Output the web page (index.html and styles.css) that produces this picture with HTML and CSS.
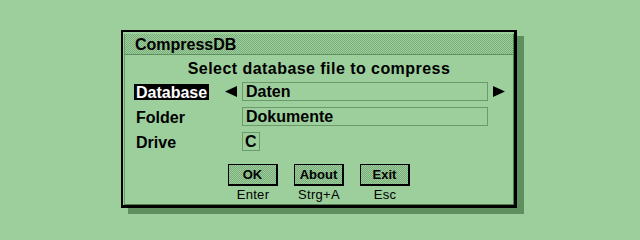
FILE: index.html
```html
<!DOCTYPE html>
<html>
<head>
<meta charset="utf-8">
<link rel="stylesheet" href="styles.css">
</head>
<body>
<div class="dialog">
  <div class="panel">
    <div class="titlebar">CompressDB</div>
    <div class="heading">Select database file to compress</div>
    <div class="form">
      <div class="label selected">Database</div>
      <div class="arrow-left"><svg width="12" height="11" viewBox="0 0 12 11"><polygon points="0,5.5 12,0 12,11" fill="#000"/></svg></div>
      <div class="field">Daten</div>
      <div class="arrow-right"><svg width="12" height="11" viewBox="0 0 12 11"><polygon points="12,5.5 0,0 0,11" fill="#000"/></svg></div>

      <div class="label">Folder</div>
      <div class="spacer"></div>
      <div class="field">Dokumente</div>
      <div class="spacer"></div>

      <div class="label">Drive</div>
      <div class="spacer"></div>
      <div class="field small">C</div>
      <div class="spacer"></div>
    </div>
    <div class="buttons">
      <div class="btn-group">
        <div class="btn">OK</div>
        <div class="caption">Enter</div>
      </div>
      <div class="btn-group">
        <div class="btn">About</div>
        <div class="caption">Strg+A</div>
      </div>
      <div class="btn-group">
        <div class="btn">Exit</div>
        <div class="caption">Esc</div>
      </div>
    </div>
  </div>
</div>
</body>
</html>
```
FILE: styles.css
```css
html, body {
  margin: 0;
  padding: 0;
}
body {
  background: #9ccf9c;
  width: 640px;
  height: 240px;
  overflow: hidden;
  font-family: "Liberation Sans", Arial, sans-serif;
  color: #000;
  padding: 30px 0 0 121px;
  box-sizing: border-box;
}
.dialog {
  width: 396px;
  height: 178px;
  box-sizing: border-box;
  border: 2px solid #000;
  border-right-width: 3px;
  border-bottom-width: 3px;
  box-shadow: 7px 6px 0 #5f8f5f;
  padding: 2px 0 0 1px;
  background: #9ccf9c;
}
.panel {
  height: 100%;
  box-sizing: border-box;
  border-left: 1px solid #6b9b6b;
  border-right: 1px solid #4f7f4f;
  border-bottom: 1px solid #4f7f4f;
  display: flex;
  flex-direction: column;
}
.titlebar {
  height: 20px;
  line-height: 21px;
  font-size: 16px;
  font-weight: bold;
  padding-left: 10px;
  border-bottom: 1px solid #5f8f5f;
  background: repeating-conic-gradient(#7aab7a 0 25%, #9ccf9c 0 50%) 0 0 / 2px 2px;
}
.heading {
  margin-top: 5px;
  text-align: center;
  font-size: 16px;
  font-weight: bold;
  letter-spacing: 0.45px;
  line-height: 18px;
}
.form {
  margin-top: 4px;
  padding-left: 9px;
  display: grid;
  grid-template-columns: 75px 33px 246px 17px;
  grid-auto-rows: 19px;
  row-gap: 6px;
}
.label {
  align-self: center;
  justify-self: start;
  font-size: 16px;
  font-weight: bold;
  line-height: 17px;
  height: 16px;
  padding: 0 2px;
}
.label.selected {
  background: #000;
  color: #fff;
  width: 71px;
}
.arrow-left {
  justify-self: end;
  margin-right: 5px;
  display: flex;
  align-items: center;
}
.arrow-right {
  justify-self: end;
  display: flex;
  align-items: center;
}
.arrow-left svg, .arrow-right svg {
  display: block;
}
.field {
  box-sizing: border-box;
  border: 1px solid #6b9b6b;
  height: 19px;
  line-height: 18px;
  font-size: 16px;
  font-weight: bold;
  padding-left: 3px;
}
.field.small {
  width: 18px;
  padding-left: 2px;
}
.buttons {
  margin-top: 13px;
  display: flex;
  justify-content: center;
  gap: 16px;
}
.btn-group {
  display: flex;
  flex-direction: column;
  align-items: center;
}
.btn {
  width: 50px;
  height: 22px;
  box-sizing: border-box;
  border: 1px solid #000;
  border-right-width: 2px;
  border-bottom-width: 2px;
  background: repeating-conic-gradient(#7aab7a 0 25%, #9ccf9c 0 50%) 0 0 / 2px 2px;
  font-size: 13px;
  font-weight: bold;
  line-height: 19px;
  text-align: center;
}
.caption {
  font-size: 13px;
  line-height: 15px;
  margin-top: 1px;
  letter-spacing: 0.3px;
}
```
